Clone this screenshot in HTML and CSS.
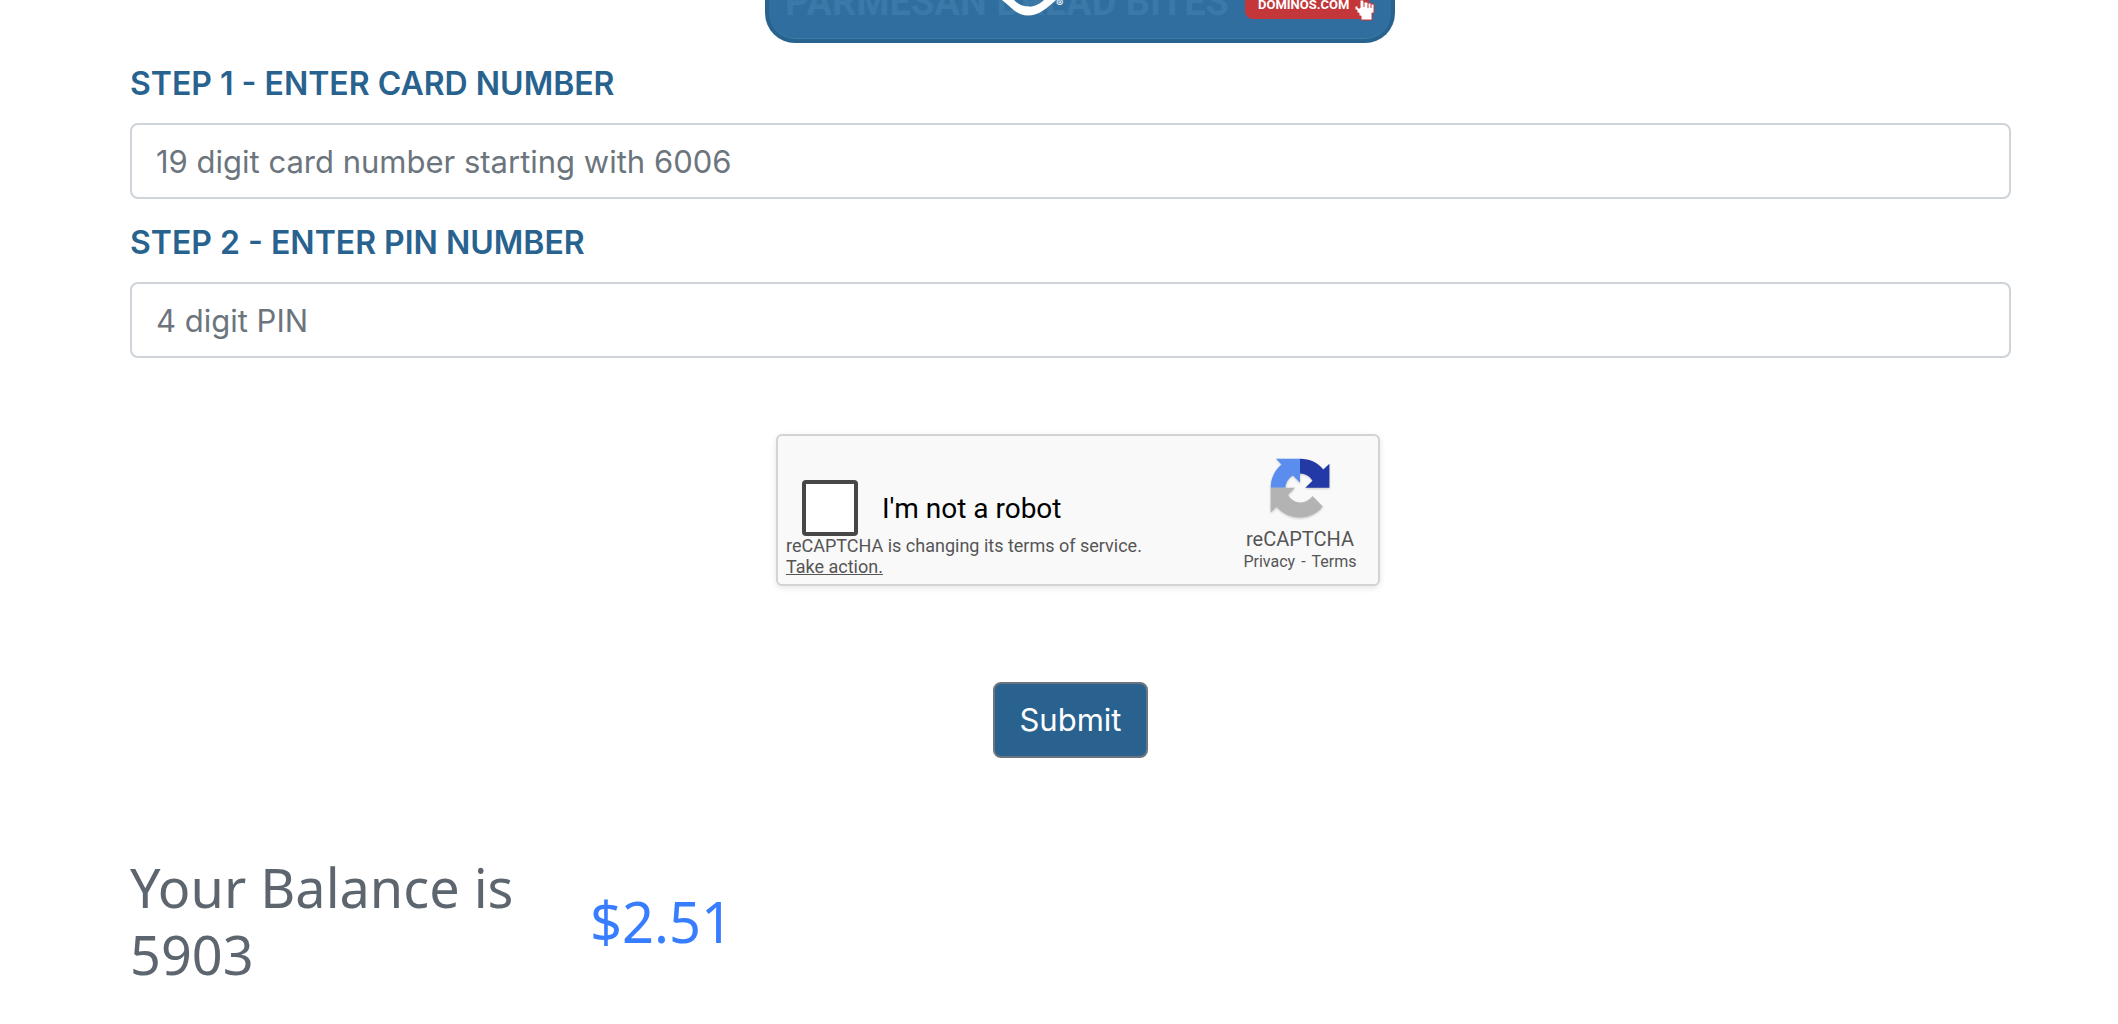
FILE: index.html
```html
<!DOCTYPE html>
<html lang="en">
<head>
<meta charset="utf-8">
<title>Gift card balance</title>
<link rel="stylesheet" href="styles.css">
</head>
<body>
<main class="page">
  <header class="banner">
    <div class="banner-card">
      <span class="banner-title">PARMESAN BREAD BITES</span>
      <svg class="banner-mark" width="60" height="16" viewBox="0 0 60 16" aria-hidden="true">
        <path d="M1 0 C11 8 16 15.500 27 15.500 C38 15.500 46 8 55 0 H43 C37 5 33 6.500 28 6.500 C22 6.500 18 5 13 0 Z" fill="#fff"/>
      </svg>
      <span class="banner-reg">®</span>
      <a class="banner-link" href="#">DOMINOS.COM</a>
      <svg class="banner-hand" width="22" height="22" viewBox="0 0 22 22" aria-hidden="true">
        <path d="M6 0 H10 V2 H14 V3 H17 V4 H20 V13 H18 V20 H7 V16 H5 V13 H3 V10 H1 V6 H4 V8 H6 Z" fill="#fff" stroke="#c3363a" stroke-width="1"/>
        <path d="M10 0 V7 M14 2 V8 M17 4 V8" stroke="#c3363a" stroke-width="1"/>
      </svg>
    </div>
  </header>

  <form class="form">
    <label class="label" for="card">STEP 1 - ENTER CARD NUMBER</label>
    <input class="field" id="card" type="text" placeholder="19 digit card number starting with 6006">
    <label class="label" for="pin">STEP 2 - ENTER PIN NUMBER</label>
    <input class="field" id="pin" type="text" placeholder="4 digit PIN">

    <div class="captcha">
      <div class="captcha-main">
        <div class="captcha-check">
          <input class="captcha-box" id="robot" type="checkbox">
          <label class="captcha-label" for="robot">I'm not a robot</label>
        </div>
        <p class="captcha-note">reCAPTCHA is changing its terms of service.<br><a href="#">Take action.</a></p>
      </div>
      <div class="captcha-brand">
        <svg class="captcha-logo" width="60" height="60" viewBox="0 0 60 60" aria-hidden="true">
          <path d="M30 .7 C39.500 .7 48 4.500 53.300 11.500 L59.400 5.700 V29.700 H35.300 L42.500 22.800 C40 18.500 35.500 15.500 30 15.500 Z" fill="#2339a6"/>
          <path d="M30 .7 H6 L11.500 6.500 C4.500 12.500 .7 20.500 .7 29.700 H15.500 C15.500 25 18.500 20 23 17.500 L30 24.800 Z" fill="#5b8dee"/>
          <path d="M.7 29.700 V54.500 L6.700 48.700 C12.500 55.500 20.500 59.400 30 59.400 C39.500 59.400 47 55.500 52.700 48.500 L42.500 38 C39.500 42 35.500 44.500 30 44.500 C25 44.500 20.500 41.500 18 36.800 L25 29.700 Z" fill="#b3b3b3"/>
        </svg>
        <span class="captcha-name">reCAPTCHA</span>
        <span class="captcha-links"><a href="#">Privacy</a><span>-</span><a href="#">Terms</a></span>
      </div>
    </div>

    <button class="submit" type="submit">Submit</button>
  </form>

  <section class="balance">
    <p class="balance-text">Your Balance is 5903</p>
    <p class="balance-amount">$2.51</p>
  </section>
</main>
</body>
</html>
```
FILE: styles.css
```css
* { box-sizing: border-box; }

body {
  margin: 0;
  background: #fff;
  font-family: Inter, "Liberation Sans", sans-serif;
  font-size: 31px;
  line-height: 48px;
}

.page { padding: 0 107px 0 130px; }

.banner {
  display: flex;
  justify-content: center;
  padding-left: 19px;
}

.banner-card {
  position: relative;
  width: 630px;
  height: 43px;
  overflow: hidden;
  border: solid #28628f;
  border-width: 0 4px 4px;
  border-radius: 0 0 30px 30px;
  background: #2f6e9e;
  box-shadow: inset 0 -1px 0 #3f7dab;
}

.banner-title {
  position: absolute;
  left: 16px;
  top: -17px;
  color: #3a79a8;
  font: bold 38px/38px Roboto, sans-serif;
  white-space: nowrap;
}

.banner-mark { position: absolute; left: 232px; top: 0; }

.banner-reg {
  position: absolute;
  left: 287px;
  top: -4px;
  color: #fff;
  font-size: 11px;
  line-height: 14px;
}

.banner-link {
  position: absolute;
  right: 22px;
  top: -9px;
  width: 124px;
  padding-left: 13px;
  border-radius: 8px;
  background: #c3363a;
  color: #fff;
  font: bold 13px/28px Roboto, sans-serif;
  text-decoration: none;
}

.banner-hand { position: absolute; right: 15px; top: 0; }

.form {
  display: flex;
  flex-direction: column;
}

.label {
  margin: 17px 0 15px;
  color: #28628f;
  font-size: 32px;
  font-weight: 600;
}

.field + .label { margin-top: 20px; }

.field {
  height: 76px;
  padding: 0 24px;
  border: 2px solid #ced4da;
  border-radius: 8px;
  background: #fff;
  color: #495057;
  font: inherit;
}

.field::placeholder { color: #6c757d; opacity: 1; }

.label { line-height: 48px; }

.captcha {
  display: flex;
  justify-content: space-between;
  align-self: center;
  width: 604px;
  height: 152px;
  margin: 76px 0 96px 15px;
  border: 2px solid #d3d3d3;
  border-radius: 6px;
  background: #f9f9f9;
  box-shadow: 0 2px 6px rgba(0, 0, 0, .1);
  font-family: Roboto, sans-serif;
}

.captcha-main { padding: 44px 0 0 8px; }

.captcha-check {
  display: flex;
  align-items: center;
  gap: 24px;
  height: 55px;
  padding-left: 16px;
}

.captcha-box {
  appearance: none;
  width: 56px;
  height: 56px;
  margin: 0;
  border: 4px solid #474747;
  border-radius: 4px;
  background: #fff;
}

.captcha-label { padding-top: 2px; color: #000; font-size: 28px; line-height: 34px; }

.captcha-note {
  margin: 0;
  color: #555;
  font-size: 18px;
  line-height: 21px;
}

.captcha a { color: inherit; }

.captcha-brand {
  display: flex;
  flex-direction: column;
  align-items: center;
  width: 156px;
  padding-top: 22px;
  color: #555;
}

.captcha-logo { filter: drop-shadow(0 1px 1px rgba(0, 0, 0, .2)); }

.captcha-name { margin-top: 9px; font-size: 20px; line-height: 24px; }

.captcha-links { display: flex; gap: 6px; font-size: 16px; line-height: 22px; }
.captcha-links a { text-decoration: none; }

.submit {
  align-self: center;
  height: 76px;
  padding: 0 24px;
  border: 2px solid #6c757d;
  border-radius: 8px;
  background: #2a628f;
  color: #fff;
  font: inherit;
}

.balance {
  display: flex;
  align-items: center;
  margin-top: 96px;
  font: 56px/67px "Noto Sans", sans-serif;
}

.balance p { margin: 0; }
.balance-text { width: 460px; padding-right: 60px; color: #5d666f; font-size: 54px; }
.balance-amount { color: #377dff; }
```
